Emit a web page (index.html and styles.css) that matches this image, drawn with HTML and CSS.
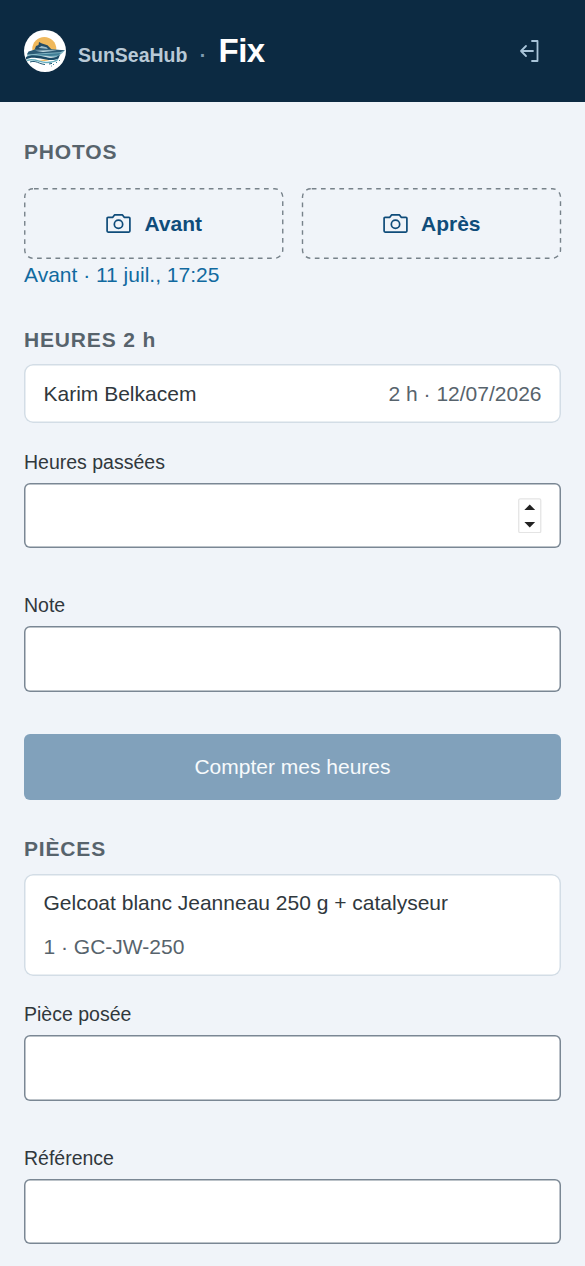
FILE: index.html
```html
<!DOCTYPE html>
<html lang="fr">
<head>
<meta charset="utf-8">
<title>SunSeaHub · Fix</title>
<link rel="stylesheet" href="styles.css">
</head>
<body>
<header class="topbar">
  <svg class="logo" viewBox="0 0 42 42" aria-hidden="true">
    <circle cx="21" cy="21" r="21" fill="#fff"/>
    <circle cx="20.300" cy="19" r="12" fill="#efb85c"/>
    <path d="M3 27l2-5 7-2.500 24 .5-1 5-8 4-22 2z" fill="#fff"/>
    <path d="M10.500 20l1.500-4 2.500-1 .5-3 3 1.500 5.500 1.800 4.500 4.700z" fill="#244c66"/>
    <path d="M14.500 18l3-2 5 1.300 1.500 1.700z" fill="#9dbcc8"/>
    <path d="M3.500 23l8-3.500h14l15.500.8c-3 3.500-6 6-10 7-9-1-18-2-28 0z" fill="#86b9c7"/>
    <path d="M4.500 21.500l7.500-2.200h14l15 1-5 2-14 .8-19 1.500z" fill="#2b5a75"/>
    <path d="M11 20.800l13-.6 9 .3-14 1.400z" fill="#c7dfe5"/>
    <path d="M12 24.500l17-1 8-.5-3 2.500-8 .5z" fill="#3f7d95"/>
    <path d="M2 27c6-3.500 15-1 22 .5 5 1 9-.5 12-3l-1.500 4c-6 3-12 1-18 0-6-.8-10-1.500-14.500 1z" fill="#1a4a66"/>
    <path d="M3 30.500c7-3 13 2 19 2 5 .3 9-1 12-3" fill="none" stroke="#66aebd" stroke-width="1.400"/>
    <path d="M6 32c6-2 9 2 15 2.500M25 34l3-.6" fill="none" stroke="#1e5875" stroke-width="1"/>
    <path d="M29 34.500h1M32 32.500h1M35 30.500h1M27 36h.8" stroke="#3e8198" stroke-width="1"/>
  </svg>
  <div class="brand"><span class="brand-name">SunSeaHub</span><span class="brand-dot">·</span><span class="brand-app">Fix</span></div>
  <svg class="logout" viewBox="0 0 20 22" aria-hidden="true">
    <path d="M12 1h5.500v20H12M13 11H1M6 6l-5 5 5 5"/>
  </svg>
</header>
<main class="content">
  <section>
    <h2 class="title">PHOTOS</h2>
    <div class="photos">
      <button class="photo">
        <svg class="dash" aria-hidden="true"><rect x=".75" y=".75" width="258" height="69.500" rx="8.250"/></svg>
        <svg class="camera" viewBox="0 0 26 20" aria-hidden="true"><path d="M2 3.500h5L8.800 1h8.400L19 3.500h5a1 1 0 0 1 1 1V18a1 1 0 0 1-1 1H2a1 1 0 0 1-1-1V4.500a1 1 0 0 1 1-1z"/><circle cx="13" cy="10.800" r="4.400"/></svg>
        Avant
      </button>
      <button class="photo">
        <svg class="dash" aria-hidden="true"><rect x=".5" y=".75" width="258" height="69.500" rx="8.250"/></svg>
        <svg class="camera" viewBox="0 0 26 20" aria-hidden="true"><path d="M2 3.500h5L8.800 1h8.400L19 3.500h5a1 1 0 0 1 1 1V18a1 1 0 0 1-1 1H2a1 1 0 0 1-1-1V4.500a1 1 0 0 1 1-1z"/><circle cx="13" cy="10.800" r="4.400"/></svg>
        Après
      </button>
    </div>
    <a class="photo-link">Avant · 11 juil., 17:25</a>
  </section>
  <section class="hours">
    <h2 class="title">HEURES 2 h</h2>
    <div class="card row"><span>Karim Belkacem</span><span class="muted">2 h · 12/07/2026</span></div>
    <label class="label">Heures passées</label>
    <div class="field number">
      <svg class="spinner" viewBox="0 0 24 36" aria-hidden="true"><rect x=".75" y=".75" width="22.500" height="34.500" rx="1.500" fill="#fff" stroke="#e4e4e4" stroke-width="1.300"/><path d="M6.500 12L12 6.500l5.500 5.500zM6.500 24.500L12 30l5.500-5.500z" fill="#222"/></svg>
    </div>
    <label class="label">Note</label>
    <div class="field"></div>
    <button class="submit">Compter mes heures</button>
  </section>
  <section class="parts">
    <h2 class="title">PIÈCES</h2>
    <div class="card stack"><span>Gelcoat blanc Jeanneau 250 g + catalyseur</span><span class="muted">1 · GC-JW-250</span></div>
    <label class="label">Pièce posée</label>
    <div class="field"></div>
    <label class="label">Référence</label>
    <div class="field"></div>
  </section>
</main>
</body>
</html>
```
FILE: styles.css
```css
* { box-sizing: border-box; }
body {
  margin: 0;
  height: 1266px;
  overflow: hidden;
  background: #f0f4f9;
  color: #30383d;
  font: 21px/31.5px "Liberation Sans", Arial, sans-serif;
}
.topbar {
  display: flex;
  align-items: center;
  height: 102px;
  padding: 0 45.5px 0 24px;
  background: #0c2a42;
}
.logo { width: 42px; height: 42px; margin-right: 12px; }
.brand { display: flex; align-items: baseline; flex: 1; padding-top: 4px; font-weight: 700; }
.brand-name { font-size: 19.5px; color: #b9c9d6; }
.brand-dot { margin: 0 12.3px; font-size: 19.5px; color: #7f9bb1; }
.brand-app { font-size: 33px; letter-spacing: -.5px; color: #fff; }
.logout { width: 20px; height: 22px; margin-top: -1px; fill: none; stroke: #a9c4d9; stroke-width: 1.8; stroke-linecap: round; stroke-linejoin: round; overflow: visible; }
.content { padding: 36px 24px 0; }
.title { margin: 0; font-size: 21px; line-height: 27px; letter-spacing: .84px; color: #57636c; }
.photos { display: grid; grid-template-columns: 259.5px 259.5px; justify-content: space-between; margin-top: 23.3px; }
.photo {
  position: relative;
  display: flex;
  align-items: center;
  justify-content: center;
  gap: 13px;
  height: 70.5px;
  padding: 0 0 0 1px;
  border: 0;
  background: none;
  color: #0f4c7a;
  font: 700 21px "Liberation Sans", Arial, sans-serif;
}
.dash { position: absolute; inset: 0; width: 100%; height: 100%; overflow: visible; fill: none; stroke: #77828a; stroke-width: 1.4; stroke-dasharray: 4.7 4.5; stroke-dashoffset: -1; }
.camera { width: 25px; height: 19px; fill: none; stroke: #0f4c7a; stroke-width: 1.8; stroke-linejoin: round; }
.photo-link { display: block; color: #116aa0; }
.hours { margin-top: 36px; }
.card { display: flex; margin-top: 11px; padding: 0 19.5px; border-radius: 9px; background: #fff; box-shadow: inset 0 0 0 1.5px #d3dde6; }
.row { align-items: center; justify-content: space-between; height: 58.5px; }
.stack { flex-direction: column; justify-content: center; gap: 12.5px; height: 101.5px; margin-top: 12px; }
.stack + .label { margin-top: 25.7px; }
.muted { color: #57636c; }
.label { display: block; margin-top: 26px; font-size: 19.5px; line-height: 27px; }
.field { height: 65.5px; margin-top: 7px; border-radius: 6px; background: #fff; box-shadow: inset 0 0 0 1.5px #7a8794; }
.field + .label { margin-top: 43.8px; }
.number { display: flex; align-items: center; justify-content: flex-end; padding-right: 19.5px; }
.spinner { width: 23.5px; height: 35.5px; }
.submit {
  display: block;
  width: 100%;
  height: 66px;
  margin-top: 42px;
  border: 0;
  border-radius: 6px;
  background: #81a1bb;
  color: #f7fafc;
  font: 21px "Liberation Sans", Arial, sans-serif;
}
.parts { margin-top: 35.6px; }
```
